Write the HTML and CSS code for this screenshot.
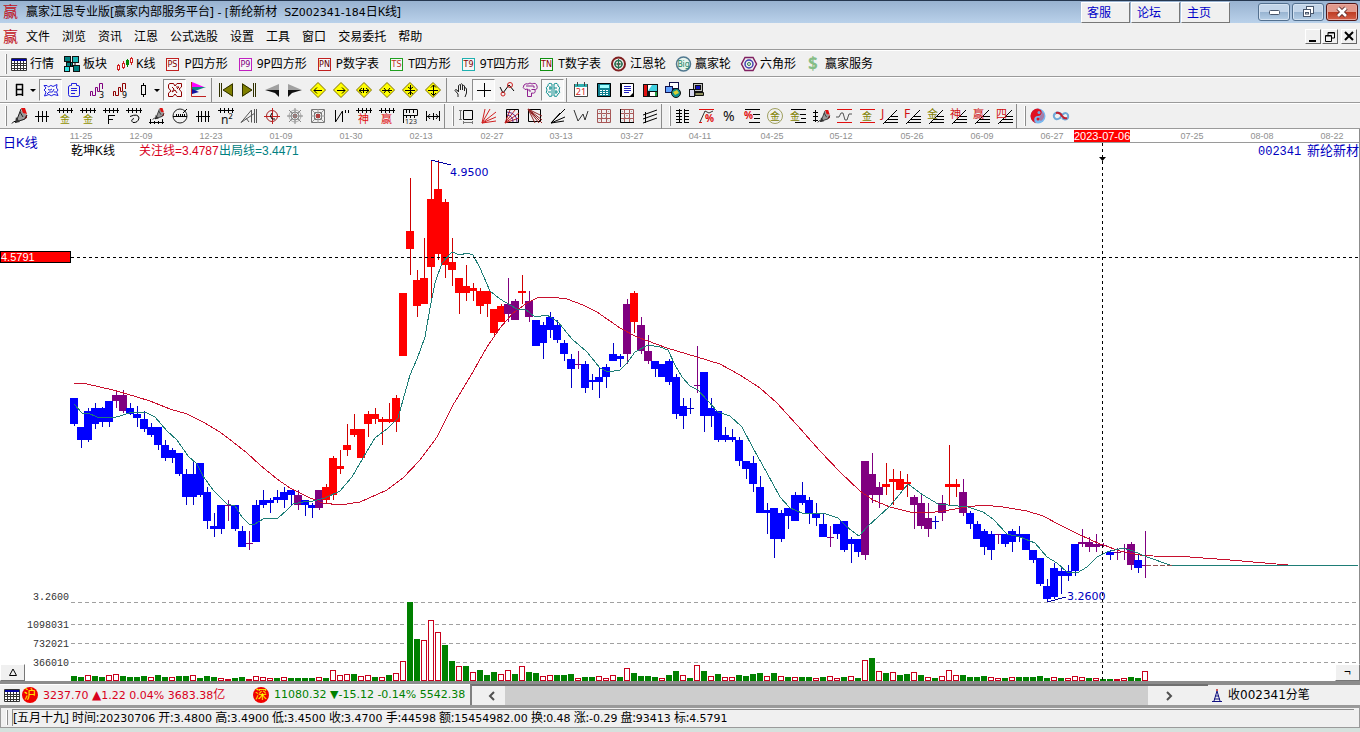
FILE: index.html
```html
<!DOCTYPE html>
<html lang="zh-CN">
<head>
    <meta charset="UTF-8">
    <meta name="viewport" content="width=device-width, initial-scale=1.0">
    <title>赢家江恩专业版</title>
    <link rel="stylesheet" href="styles.css">
</head>
<body>
    <div class="window">
        <header class="titlebar">
            <svg class="icon" data-icon="logo"></svg>
            <h1 class="title">赢家江恩专业版[赢家内部服务平台]<span class="num"> - [</span>新纶新材<span class="num">&nbsp; SZ002341-184</span>日K线]</h1>
            <nav class="links">
                <a href="#">客服</a>
                <a href="#">论坛</a>
                <a href="#">主页</a>
            </nav>
            <div class="window-buttons">
                <button aria-label="最小化"><svg class="icon" data-icon="winMin"></svg></button>
                <button aria-label="还原"><svg class="icon" data-icon="winRestore"></svg></button>
                <button class="close" aria-label="关闭"><svg class="icon" data-icon="winClose"></svg></button>
            </div>
        </header>

        <div class="menubar">
            <svg class="icon" data-icon="logo"></svg>
            <nav class="menu">
                <button>文件</button>
                <button>浏览</button>
                <button>资讯</button>
                <button>江恩</button>
                <button>公式选股</button>
                <button>设置</button>
                <button>工具</button>
                <button>窗口</button>
                <button>交易委托</button>
                <button>帮助</button>
            </nav>
            <div class="mdi-buttons">
                <button aria-label="最小化"><svg class="icon" data-icon="mdiMin"></svg></button>
                <button aria-label="还原"><svg class="icon" data-icon="mdiRestore"></svg></button>
                <button class="close" aria-label="关闭"><svg class="icon" data-icon="mdiClose"></svg></button>
            </div>
        </div>

        <div class="toolbar toolbar-text">
            <span class="grip"></span>
            <button><svg class="icon" data-icon="quote"></svg>行情</button>
            <button><svg class="icon" data-icon="blocks"></svg>板块</button>
            <button><svg class="icon" data-icon="kline"></svg>K线</button>
            <button><svg class="icon" data-icon="ps"></svg>P四方形</button>
            <button><svg class="icon" data-icon="p9"></svg>9P四方形</button>
            <button><svg class="icon" data-icon="pn"></svg>P数字表</button>
            <button><svg class="icon" data-icon="ts"></svg>T四方形</button>
            <button><svg class="icon" data-icon="t9"></svg>9T四方形</button>
            <button><svg class="icon" data-icon="tn"></svg>T数字表</button>
            <button><svg class="icon" data-icon="gannWheel"></svg>江恩轮</button>
            <button><svg class="icon" data-icon="bigWheel"></svg>赢家轮</button>
            <button><svg class="icon" data-icon="hexagon"></svg>六角形</button>
            <button><svg class="icon" data-icon="dollar"></svg>赢家服务</button>
        </div>

        <div class="toolbar" id="view-tools"></div>
        <div class="toolbar" id="draw-tools"></div>

        <main class="chart">
            <svg class="plot" id="plot">
                <g transform="translate(0 -129)">
                    <path class="axis-line" d="M70 142.5H1359"/>
                    <g id="dates"></g>
                    <text class="label-blue cjk" x="3" y="147">日K线</text>
                    <text class="label-black cjk-small" x="71" y="155">乾坤K线</text>
                    <text class="label-red cjk-small" x="139" y="155">关注线=3.4787</text>
                    <text class="label-teal cjk-small" x="219" y="155">出局线=3.4471</text>
                    <text class="label-blue code" x="1258" y="155">002341</text>
                    <text class="label-blue cjk" x="1307" y="155">新纶新材</text>

                    <g class="grid">
                        <line x1="71" y1="602.5" x2="100%" y2="602.5"/>
                        <line x1="71" y1="624.5" x2="100%" y2="624.5"/>
                        <line x1="71" y1="643.5" x2="100%" y2="643.5"/>
                        <line x1="71" y1="662.5" x2="100%" y2="662.5"/>
                    </g>
                    <g class="scale">
                        <text x="69" y="600">3.2600</text>
                        <text x="69" y="628">1098031</text>
                        <text x="69" y="647">732021</text>
                        <text x="69" y="666">366010</text>
                    </g>

                    <g id="volumes"></g>
                    <g id="candles"></g>
                    <polyline id="line-attention" class="line-red"/>
                    <polyline id="line-exit" class="line-teal"/>
                    <path class="line-last" d="M1146 565.5H1172"/>

                    <path class="pointer" d="M431 160 451 165M1047 602 1066 597"/>
                    <text class="label-blue number" x="450" y="176">4.9500</text>
                    <text class="label-blue number" x="1067" y="600">3.2600</text>

                    <g class="cross">
                        <line x1="71" y1="257.5" x2="100%" y2="257.5"/>
                        <line x1="1102.5" y1="143" x2="1102.5" y2="681"/>
                    </g>
                    <path d="M1099 157H1106L1102.5 161Z"/>
                    <rect class="price-box" x="0.5" y="251.5" width="70" height="11"/>
                    <text class="box-text" x="1" y="261">4.5791</text>
                    <rect class="date-box" x="1074" y="130" width="56" height="12"/>
                    <text class="box-text" x="1074" y="140">2023-07-06</text>
                </g>
            </svg>
            <button class="corner corner-left" aria-label="展开"><svg class="icon" data-icon="triangle"></svg></button>
            <button class="corner corner-right">¬</button>
        </main>

        <div class="statusbar">
            <div class="quotes">
                <svg class="icon" data-icon="quote"></svg>
                <svg class="icon badge" data-icon="shanghai"></svg>
                <span class="up index-sh"><span class="num">3237.70 </span>▲<span class="num">1.22 0.04% 3683.38</span>亿</span>
                <svg class="icon badge" data-icon="shenzhen"></svg>
                <span class="down num">11080.32 ▼-15.12 -0.14% 5542.38</span>
            </div>
            <div class="scrollbar">
                <button aria-label="向左"><svg class="icon" data-icon="scrollLeft"></svg></button>
                <div class="thumb"></div>
                <button class="right" aria-label="向右"><svg class="icon" data-icon="scrollRight"></svg></button>
            </div>
            <div class="feed">
                <svg class="icon" data-icon="antenna"></svg>
                <span>收002341分笔</span>
            </div>
        </div>

        <footer class="infobar">
            <span class="grip"></span>
            <div class="info">[五月十九] 时间:<span class="num">20230706</span> 开:<span class="num">3.4800</span> 高:<span class="num">3.4900</span> 低:<span class="num">3.4500</span> 收:<span class="num">3.4700</span> 手:<span class="num">44598</span> 额:<span class="num">15454982.00</span> 换:<span class="num">0.48</span> 涨:<span class="num">-0.29</span> 盘:<span class="num">93413</span> 标:<span class="num">4.5791</span></div>
        </footer>
    </div>

    <script src="script.js"></script>
</body>
</html>
```

FILE: styles.css
```css
* {
    box-sizing: border-box;
}
body {
    margin: 0;
    background-color: #d5e1dd;
    font-family: "Noto Sans", "Noto Sans CJK SC", sans-serif;
    font-size: 12px;
    line-height: 16px;
    color: #000;
}
button {
    font: inherit;
    color: inherit;
    margin: 0;
    padding: 0;
    border: none;
    background: none;
    white-space: nowrap;
}
.window {
    display: flex;
    flex-direction: column;
    height: 100vh;
    padding-bottom: 4px;
    overflow: hidden;
}
.icon {
    display: block;
    flex: none;
    width: 16px;
    height: 16px;
    fill: none;
    overflow: visible;
}
.num {
    font-family: "DejaVu Sans", sans-serif;
    font-size: 11px;
}

/* title bar */
.titlebar {
    display: flex;
    align-items: center;
    flex: none;
    height: 23px;
    padding: 0 2px;
    border-top: 1px solid #25364e;
    background: linear-gradient(#98b2d0, #b9d1ea);
}
.title {
    flex: 1;
    margin: 0 0 0 8px;
    font-size: 12px;
    font-weight: normal;
    white-space: nowrap;
}
.links {
    display: flex;
    gap: 1px;
    margin-right: 28px;
}
.links a {
    width: 49px;
    height: 21px;
    padding: 2px 5px;
    border: 1px solid;
    border-color: #fff #777 #777 #fff;
    background-color: #f0f0f0;
    color: #0000c8;
    text-decoration: none;
}
.window-buttons {
    display: flex;
    gap: 2px;
}
.window-buttons button {
    display: flex;
    align-items: center;
    justify-content: center;
    width: 32px;
    height: 18px;
    border: 1px solid #53708f;
    border-radius: 3px;
    background: linear-gradient(#c3d5e9 50%, #97b3d0 50%, #b5cee6);
    box-shadow: inset 0 0 0 1px #d4e2f1;
}
.window-buttons .close {
    border-color: #521616;
    background: linear-gradient(#e29a8d 50%, #bd3b22 50%, #d5614a);
    box-shadow: inset 0 0 0 1px #e9aaa0;
}

/* menu */
.menubar {
    display: flex;
    align-items: center;
    flex: none;
    height: 27px;
    padding: 1px 3px 0 2px;
    border-bottom: 1px solid #9a9a9a;
    background-color: #f0f0f0;
}
.menu {
    display: flex;
    flex: 1;
    padding-left: 2px;
}
.menu button {
    padding: 1px 6px 0;
}
.mdi-buttons {
    display: flex;
    gap: 1px;
}
.mdi-buttons button {
    width: 16px;
    height: 15px;
    border: 1px solid;
    border-color: #fff #666 #666 #fff;
    background-color: #f0f0f0;
}
.mdi-buttons .icon {
    width: 14px;
    height: 13px;
}
.mdi-buttons .close {
    margin-left: 2px;
}

/* toolbars */
.toolbar {
    display: flex;
    align-items: center;
    flex: none;
    height: 26px;
    padding-left: 5px;
    border-top: 1px solid #fff;
    border-bottom: 1px solid #9a9a9a;
    background-color: #f0f0f0;
}
.toolbar-text {
    height: 27px;
}
.grip {
    flex: none;
    width: 2px;
    height: 20px;
    border-left: 1px solid #fff;
    border-right: 1px solid #8c8c8c;
}
.toolbar-text button {
    display: flex;
    align-items: center;
    gap: 3px;
    padding: 0 6px 0 4px;
}
.tool {
    display: flex;
    align-items: center;
    justify-content: center;
    flex: none;
    width: 23px;
    height: 22px;
}
.tool.drop {
    width: 32px;
}
.tool.drop::after {
    content: "";
    margin-left: 3px;
    border: 3px solid transparent;
    border-top-color: #000;
    border-bottom: none;
}
.tool.pressed {
    border: 1px solid;
    border-color: #8c8c8c #fff #fff #8c8c8c;
    background-color: #f8f8f8;
}
.separator {
    flex: none;
    width: 5px;
    height: 24px;
    border-right: 2px solid #f0f0f0;
    background: linear-gradient(90deg, transparent 2px, #8c8c8c 2px);
}
.break {
    flex: none;
    width: 8px;
    height: 25px;
    border-left: 1px solid #8c8c8c;
}

/* chart */
.chart {
    position: relative;
    flex: 1;
    min-height: 0;
    border-right: 1px solid #8c8c8c;
    background-color: #fff;
}
.plot {
    display: block;
    width: 100%;
    height: 100%;
}
.plot text {
    white-space: pre;
}
.axis-line {
    stroke: #9a9a9a;
}
.date {
    font: 9px "Liberation Sans", sans-serif;
    fill: #909090;
    text-anchor: middle;
}
.cjk {
    font: 13px "Liberation Sans", "Noto Sans CJK SC", sans-serif;
}
.cjk-small {
    font: 12px "Liberation Sans", "Noto Sans CJK SC", sans-serif;
}
.code {
    font: 12px "Liberation Mono", monospace;
}
.number {
    font: 11px "DejaVu Sans", sans-serif;
}
.box-text {
    font: 11px "Liberation Sans", sans-serif;
    fill: #fff;
}
.label-blue {
    fill: #0000c0;
}
.label-black {
    fill: #000;
}
.label-red {
    fill: #d8001c;
}
.label-teal {
    fill: #008080;
}
.scale text {
    font: 10px "Liberation Mono", monospace;
    fill: #333;
    text-anchor: end;
}
.grid line {
    stroke: #a0a0a0;
    stroke-dasharray: 4 3;
}
.cross line {
    stroke: #000;
    stroke-dasharray: 3 3;
}
.price-box {
    fill: #f00;
    stroke: #000;
}
.date-box {
    fill: #f00;
}
.blue {
    fill: #00f;
    stroke: #0000c8;
}
.red {
    fill: #f00;
    stroke: #d00000;
}
.purple {
    fill: #800080;
    stroke: #800080;
}
#candles,
#volumes {
    shape-rendering: crispEdges;
}
#candles rect {
    stroke: none;
}
.vol-up {
    fill: #fff;
    stroke: #c8001c;
}
.vol-down {
    fill: #008000;
    stroke: #008000;
}
.line-red,
.line-teal,
.line-last,
.pointer {
    fill: none;
    stroke: #c8102e;
    shape-rendering: crispEdges;
}
.line-teal {
    stroke: #1e7d76;
}
.line-last {
    stroke: #905050;
    stroke-dasharray: 5 2;
}
.pointer {
    stroke: #0000a0;
}
.corner {
    position: absolute;
    bottom: 0;
    display: flex;
    justify-content: center;
    width: 25px;
    height: 17px;
    border: 1px solid;
    border-color: #fff #777 #777 #fff;
    background-color: #f0f0f0;
    line-height: 14px;
}
.corner-left {
    left: 0;
}
.corner-right {
    right: -1px;
}

/* bottom bars */
.statusbar {
    display: flex;
    flex: none;
    height: 26px;
    border-top: 3px solid #8c8c8c;
    border-bottom: 2px solid #999;
    background-color: #f0f0f0;
    font-family: "DejaVu Sans", "Noto Sans CJK SC", sans-serif;
}
.quotes {
    display: flex;
    align-items: center;
    flex: none;
    width: 470px;
    padding-left: 4px;
    border-top: 1px solid #fff;
    overflow: hidden;
    white-space: nowrap;
}
.quotes .badge {
    margin: 0 5px 0 2px;
}
.index-sh {
    flex: none;
    width: 208px;
}
.up {
    color: #d8001c;
}
.down {
    color: #008000;
}
.scrollbar {
    display: flex;
    flex: 1;
    border-top: 2px solid #707070;
    border-left: 2px solid #808080;
    background-color: #f0f0f0;
}
.scrollbar button {
    display: flex;
    align-items: center;
    justify-content: flex-end;
    width: 33px;
    padding-right: 5px;
}
.scrollbar .right {
    justify-content: flex-start;
    width: 60px;
    padding: 0 0 0 13px;
}
.thumb {
    flex: 1;
    background-color: #cdcdcd;
}
.feed {
    display: flex;
    align-items: center;
    flex: none;
    gap: 2px;
    width: 152px;
    padding-left: 2px;
    border-top: 1px solid #8c8c8c;
}
.infobar {
    display: flex;
    align-items: center;
    flex: none;
    height: 21px;
    padding: 1px 5px;
    border: 1px solid #9a9a9a;
    background-color: #f0f0f0;
}
.infobar .grip {
    height: 15px;
    margin-right: 4px;
}
.info {
    flex: 1;
    height: 17px;
    border-top: 1px solid #8c8c8c;
    border-left: 1px solid #8c8c8c;
    white-space: nowrap;
}
```

FILE: script.js
```js
// ---------- icons ----------
const p = (d, color = '#000', extra = '') => `<path d="${d}" stroke="${color}" ${extra}/>`;
const f = (d, color) => `<path d="${d}" fill="${color}"/>`;
const t = (s, x, y, size, color, extra = '') =>
    `<text x="${x}" y="${y}" font-size="${size}" fill="${color}" ${extra}>${s}</text>`;

const tag = (s, color, frame) =>
    `<rect x="1.5" y="2.5" width="12" height="12" stroke="${frame}" fill="#fff" fill-opacity=".4"/>` +
    t(s, 7.5, 11, 8, color, 'font-family="DejaVu Sans" text-anchor="middle"');
const comb = p('M0 2.5H16M2.5 0v5M6.5 0v5M10.5 0v5M14.5 0v5');
const fan = (s, color) => p('M3 14.5H16M6 11.5H16M9 8.5H16M1 16 15 2') +
    t(s, -1, 10, s.charCodeAt(0) > 255 ? 11 : 12, color);
const diamond = arrows => '<path d="M8 .5 15.5 8 8 15.5 .5 8Z" fill="#ff0" stroke="#807000"/>' + p(arrows);
const wave = (n, color) => p('M1.5 14V9.5H3.5V13.5H6.5V5.5H8.5V9.5H10.5V1.5H13.5V7', color) +
    t(n, 10, 16, 8, '#000', 'font-family="DejaVu Sans"');
const pen = f('M9 3 12 2 16 8 13 12 5 14Z', '#9a9a9a') + f('M10 0H14L16 6 12 5Z', '#e01010') +
    f('M13 11 16 6V10Z', '#a01010') + p('M10 1 5 14 14 11 16 7M9 4 12 9', '#222') + f('M5 9 9 14 4 15Z', '#333') + p('M1 15.5Q3 12 5 14');
const paneGrid = p('M1.5 1.5H14.5V14.5H1.5ZM1.5 5.5H14.5M1.5 10.5H14.5M5.5 1.5V14.5M10.5 1.5V14.5', '#a85858') +
    p('M1 1 15 15M15 1 1 15', '#999', 'stroke-dasharray="1 2"');

const icons = {
    logo: t('赢', 1, 13, 15, '#c01020', 'font-family="Noto Sans CJK SC"'),
    winMin: '<rect x="3.5" y="6.5" width="10" height="4" rx="1" fill="#fff" stroke="#49566b"/>',
    winRestore: '<g stroke="#49566b" fill="#fff"><rect x="6.5" y="2.5" width="7" height="7"/><rect x="3.5" y="5.5" width="7" height="7"/><rect x="5.5" y="8.5" width="3" height="1.5"/></g>',
    winClose: p('M4 4 12 12M12 4 4 12', '#5a2a2a', 'stroke-width="4.5"') + p('M4 4 12 12M12 4 4 12', '#fff', 'stroke-width="2.6"'),
    mdiMin: f('M3 10H10V12H3Z', '#000'),
    mdiRestore: p('M5 5V2.5H11.5V8H9M2.5 5.5H8.5V11.5H2.5ZM5 3H11M3 6H8'),
    mdiClose: p('M3 2 11 10M11 2 3 10', '#000', 'stroke-width="2"'),
    triangle: p('M8 4 11.5 10.5H4.5Z'),

    quote: f('M0 2H16V15H0Z', '#fff') +
        p('M.5 2.5H15.5V14.5H.5ZM3.5 5V15M6.5 5V15M9.5 5V15M12.5 5V15M0 7.5H16M0 9.5H16M0 12.5H16', '#333') + f('M1 3H15V5H1Z', '#0000a0'),
    blocks: '<g fill="#008080" stroke="#111"><rect x=".5" y=".5" width="6" height="5"/><rect x="8.5" y=".5" width="6" height="6" fill="#20b8b8"/><rect x="2.5" y="6.5" width="6" height="4"/><rect x=".5" y="10.5" width="5" height="5" fill="#30e0e0"/><rect x="9.5" y="9.5" width="6" height="6"/></g>' + p('M6.5 6V10H9M11 7v2'),
    kline: p('M1.5 8V15M6.5 5V13M14.5 1V9', '#d02020') + p('M10.5 3V11', '#008000') +
        '<g stroke="#d02020" fill="#fff"><rect x=".5" y="9.5" width="2" height="4"/><rect x="5.5" y="7.5" width="2" height="4"/><rect x="13.5" y="2.5" width="2" height="4"/></g><rect x="9.5" y="4.5" width="2" height="4" fill="#080" stroke="#080"/>',
    ps: tag('PS', '#800000', '#c02020'),
    p9: tag('P9', '#800080', '#c020c0'),
    pn: tag('PN', '#600000', '#c02020'),
    ts: tag('TS', '#c03020', '#20a020'),
    t9: tag('T9', '#800000', '#20b0b0'),
    tn: tag('TN', '#900000', '#109010'),
    gannWheel: '<circle cx="7.5" cy="8" r="6.5" stroke="#802020" stroke-width="2"/><circle cx="7.5" cy="8" r="3.5" stroke="#287050" stroke-width="1.5"/><circle cx="7.5" cy="8" r="1.5" fill="#a02020"/>' + p('M7.5 3V13M3 8H12', '#287050'),
    bigWheel: '<circle cx="7.5" cy="8" r="7" stroke="#507890" stroke-width="1.5" fill="#e8f4ec"/>' + t('Big', 7.5, 11, 8, '#108060', 'text-anchor="middle"'),
    hexagon: p('M4 1.5H12L15.5 8 12 14.5H4L.5 8Z', '#802060', 'stroke-width="1.5"') + '<circle cx="8" cy="8" r="4" stroke="#4040b0" stroke-width="1.5"/><circle cx="8" cy="8" r="1.5" stroke="#308050"/>',
    dollar: t('$', 2, 14, 17, '#86bd86', 'font-weight="bold"'),

    day: p('M5.5 2V14M11.5 2V14M5 2.5H12M5 7.5H12M5 12.5H12', '#000', 'stroke-width="1.5"'),
    cloud: p('M1 3.5H4L5.5 5Q8 2 10 4.5L14 2.5 13.5 6 15 8 13.5 10 15 13.5 11 12.5Q8 15 6 12.5L1.5 14 3 10 1 8 3 6ZM5 7.5Q7 9 9 7M11 7 9.5 10H6M4 12 6 10M12 9V11', '#2020e0'),
    clipboard: p('M4.5 3.5H5.5V1.5H10.5V3.5H12Q13.5 3.5 13.5 5V12.5Q13.5 14.5 12 14.5H4.5Q2.5 14.5 2.5 12.5V5Q2.5 3.5 4.5 3.5ZM5 6.5H11M5 8.5H11M5 11.5H9', '#2020e0'),
    wave3: wave(3, '#800080'),
    wave9: wave(9, '#900000'),
    candle: '<rect x="6.5" y="3.5" width="4" height="9" stroke="#000"/>' + p('M8.5 1V3M8.5 13V15'),
    maze: p('M2.5 1.5H6.5L8 4 10 1.5H14.5V5L12 7 14.5 10V14.5H10L8 12 6 14.5H1.5V11L4 9 1.5 6V3ZM5 5 7 7 5 10 8 8 10 11M9 5H12L10 7', '#900000'),
    flag: f('M2 0 14 5H2Z', '#f0f') + f('M2 5H16L2 10Z', '#108080') + f('M2 7 9 10 2 12Z', '#1010a0') + p('M1.5 0V14.5H16', '#c02020'),
    first: p('M1.5 1V15M3.5 1V15', '#303000') + f('M15 1V15L5 8Z', '#808000') + p('M14.5 2V14L5 8Z', '#303000'),
    last: p('M12.5 1V15M14.5 1V15', '#303000') + f('M1 1V15L11 8Z', '#808000') + p('M1.5 2V14L11 8Z', '#303000'),
    prev: f('M15 2V8H1Z', '#a0a0a0') + f('M1 8H15V15L11 11Z', '#111'),
    next: f('M1 2V8H15Z', '#a0a0a0') + f('M15 8H1V15L5 11Z', '#111'),
    goLeft: diamond('M4 8.5H12M7 5.5 4 8.5 7 11.5'),
    goRight: diamond('M4 8.5H12M9 5.5 12 8.5 9 11.5'),
    widen: diamond('M3 8.5H13M6 6 3 8.5 6 11M10 6 13 8.5 10 11M7.5 6V11'),
    narrow: diamond('M3 8.5H13M5 6 7 8.5 5 11M11 6 9 8.5 11 11'),
    shrink: diamond('M3 8.5H13M8.5 3V13M6 5 8.5 7 11 5M6 12 8.5 10 11 12'),
    expand: diamond('M3 8.5H13M8.5 3V13M6 5.5 8.5 3 11 5.5M6 11 8.5 13.5 11 11'),
    hand: p('M5 15V12L2 8.5Q2 7 4 8L5.5 10V3.5Q6.5 2 7.5 3.5V8V2.5Q8.5 1 9.5 2.5V8V4Q11 2.5 11.5 4V9V6Q13 5 13.5 7V11L12 15', '#222'),
    cross: p('M8.5 1V15M1 8.5H15'),
    zigzag: p('M1 5 4 11 10 3 15 9') + '<circle cx="4" cy="12" r="2" stroke="#d02020"/><circle cx="11" cy="3" r="2.5" stroke="#d02020"/>',
    balloon: p('M2 3Q4 1 6 2Q8 0 10 2Q14 0 15 4Q16 8 12 7.5H9.5M2 3Q0 6 3 7.5L5.5 7V14.5H9.5V11Q14 12 13 8M4 4H12V6M7 7V9H9', '#902090'),
    brain: p('M7 2Q3 0 3 4Q0 5 2 8Q0 11 3 12Q4 16 7 14ZM9 2Q13 0 13 4Q16 5 14 8Q16 11 13 12Q12 16 9 14ZM4 6H7M9 6H12M3 10H6M10 10H13M5 4V8M11 8V12', '#109090'),
    calendar: f('M1 2H15V15H1Z', '#fff') + f('M1 2H15V5H1Z', '#30b0b0') + p('M1.5 2V14.5H14.5V2M4.5 0V4M11.5 0V4', '#444') + t('21', 8, 13, 9, '#d02020', 'text-anchor="middle"'),
    calculator: f('M1 1H15V15H1Z', '#108090') + p('M1.5 1.5H14.5V14.5H1.5Z') + f('M4 3H13V6H4Z', '#a0ffff') + p('M4 8.5H13M4 10.5H13M4 12.5H13', '#fff', 'stroke-dasharray="2 1"'),
    notepad: f('M2 1H14V15H2Z', '#fff') + p('M2.5 1.5H14.5V14.5H2.5ZM1.5 1V15') + p('M5 4.5H12M5 6.5H12M5 8.5H12M5 10.5H10', '#2020c0') + f('M10 15 15 10V15Z', '#000'),
    floppy: f('M1 2H16V15H1Z', '#111') + f('M2 3H5V14H2Z', '#e01010') + f('M6 3H15V9H6Z', '#40d0e0') + f('M6 3H10L6 9Z', '#fff') + f('M8 10H13V14H8Z', '#fff') + f('M13 10H15V14H13Z', '#20a040'),
    network: '<g stroke="#10104a"><rect x="4.5" y=".5" width="9" height="6" fill="#fff"/><rect x=".5" y="4.5" width="7" height="6" fill="#60a0ff"/></g><circle cx="11" cy="11" r="4.5" fill="#109090" stroke="#111"/>' + f('M8 10 12 8 14 11 10 13Z', '#d8d030'),
    computers: '<g stroke="#111"><rect x="5.5" y="1.5" width="9" height="8" fill="#c0c0c0"/><rect x="7.5" y="3.5" width="5" height="4" fill="#1010c0"/><path d="M7 10.5H15.5V13.5H7Z" fill="#909060"/><rect x="1.5" y="7.5" width="5" height="7" fill="#d8d8f0"/></g>',

    pen: pen,
    hash: p('M1 8.5H15M4.5 3V14M8.5 3V14M12.5 3V14'),
    combGold: comb + t('金', 3, 15, 10, '#909000'),
    combF: comb + p('M5 7.5H12M5.5 7V16M5 11.5H10'),
    spiral: comb + p('M4 8.5Q12 5 13 10Q12 15 7 14.5Q4 12 8 10.5'),
    penRuler: '<g transform="translate(3 0) scale(.75)">' + pen + '</g>' + p('M0 14.5H15M1.5 11V16M5.5 13V16M9.5 13V16M13.5 11V16'),
    circleRuler: '<circle cx="8" cy="8" r="7" stroke="#222"/>' + p('M1 8.5H15M4.5 6V9M6.5 6V9M8.5 6V9M10.5 6V9M12.5 6V9M11 5 15 1'),
    hash4: p('M1 8.5H15M3.5 3V14M6.5 3V14M10.5 3V14M13.5 3V14'),
    combN: comb + t('n²', 3, 16, 12, '#111'),
    angles: p('M0 14.5 10.5 2V14.5M0 14.5 14 5M13.5 1V15M15.5 1V15M5 10 8 14', '#555'),
    target: '<circle cx="8" cy="8" r="5.5" stroke="#a02020"/>' + p('M8.5 0V16M0 8.5H16', '#c02020') + p('M8 5Q5 8 8 11H11'),
    web: '<circle cx="8" cy="8" r="6" stroke="#aaa"/><circle cx="8" cy="8" r="4" stroke="#888"/><circle cx="8" cy="8" r="2" fill="#b04040"/>' + p('M8 0V16M0 8H16M2 2 14 14M14 2 2 14', '#888'),
    squareWeb: p('M1.5 1.5H14.5V14.5H1.5ZM4.5 4.5H11.5V11.5H4.5Z', '#777') + p('M1 1 15 15M15 1 1 15M8 1V15M1 8H15', '#999') + f('M6 6H10V10H6Z', '#b04040'),
    slopes: p('M2.5 2V14L9.5 3V14M12.5 2V5M15.5 2V5'),
    combGod: comb + t('神', 2, 15, 11, '#e01010'),
    combWin: comb + t('赢', 2, 15, 11, '#e01010'),
    scaleBars: p('M1.5 15V1.5H15.5M1 7.5H15.5V2M4.5 2V5M7.5 2V5M11.5 2V5M4.5 8V10M8.5 8V10M12.5 8V10') + t('123', 3, 16, 7, '#222'),
    width: p('M1.5 3V13M14.5 3V13M2 8.5H14M5 6 3 8.5 5 11M11 6 13 8.5 11 11M8.5 5V12'),

    rectTool: p('M5.5 2.5H14.5V11.5H5.5Z') + p('M2.5 2V12M1 2.5H4M1 11.5H4M5 14.5H15M14.5 13V16M5.5 13V16', '#777'),
    fanRed: p('M1 15 4 1M1 15 9 1M1 15 15 4M1 15 15 9M1 15 15 13', '#d02020'),
    fanBox: p('M2.5 1.5H14.5V14.5H2.5Z') + p('M1 15 6 2M1 15 11 2M1 15 15 5M1 15 15 10', '#c02020') + p('M3 7Q9 8 9 14M3 4Q13 5 13 14', '#602080'),
    fanDown: p('M1.5 1.5H13.5V13.5H1.5Z') + p('M1 1 15 15M1 1 15 8M1 1 8 15M1 1 15 12M1 1 12 15', '#902020'),
    rays: p('M1 15 10 5M1 15 15 1M1 15 15 9M1 15 14 13'),
    zigDots: p('M1 2 5 13 10 6 12 12 15 3', '#333'),
    gridA: paneGrid,
    gridB: paneGrid + p('M1.5 1V14.5H15'),
    parallels: p('M1 7 15 2M1 11 15 6M1 15 15 10M3.5 4V15'),

    ladder: p('M4.5 1V15M9.5 1V15M1 2.5H7M1 5.5H7M1 8.5H7M1 11.5H7M1 14.5H7M9 2.5H14M9 5.5H14M9 8.5H14M9 11.5H14M9 14.5H14'),
    percentTop: p('M1 1.5H16M1 14.5H4', '#e01010') + p('M2 14 7 3 11 5 15 3', '#333') + t('%', 7, 14, 10, '#e01010', 'font-weight="bold"'),
    percent: t('%', 2, 13, 14, '#111'),
    percentLines: p('M1 1.5H16M9 6.5H16M10 10.5H16M5 14.5H16') + t('%', 0, 11, 10, '#e01010', 'font-weight="bold"'),
    goldCircle: '<circle cx="8" cy="8" r="7.5" stroke="#a0a060"/>' + t('金', 3, 12, 10, '#808000'),
    goldLines: p('M1 1.5H16M10 6.5H16M11 10.5H16M5 14.5H16') + t('金', 0, 12, 10, '#808000'),
    penScale: p('M2.5 2V14M0 4.5H5M0 8.5H5M0 12.5H5') + '<g transform="translate(4 2) scale(.8)">' + pen + '</g>',
    waveBand: p('M1 1.5H16M1 14.5H16', '#e01010') + p('M0 9H3L5 5H7L9 12H11L13 6H16', '#555'),
    goldBand: p('M1 1.5H16M1 14.5H16', '#e01010') + t('金', 3, 12, 10, '#808000'),
    fanJ: fan('J', '#d01010'),
    fanF: fan('F', '#d01010'),
    fanGold: fan('金', '#808000'),
    fanGod: fan('神', '#d01010'),
    fanWin: fan('赢', '#d01010'),
    fanFour: fan('四', '#d01010'),
    taiji: '<circle cx="8" cy="8" r="7.5" fill="#78b8f0"/><path d="M8 .5A7.5 7.5 0 0 0 8 15.5A3.7 3.7 0 0 1 8 8A3.7 3.7 0 0 0 11 2Z" fill="#e01020"/><path d="M11 2Q14 5 10 8Q8 11 11 13Q15 10 14 6Z" fill="#d04060" fill-opacity=".5"/><circle cx="9" cy="4.5" r="1.5" fill="#70a8e0"/><circle cx="8" cy="11" r="1.5" fill="#e01020"/>',
    infinity: p('M9 7Q7 4 4 4.5Q0 6 1 9Q3 13 7 10L9 7Q13 3 15 7Q16 11 12 11.5Q10 11 9 10', '#70a8d8', 'stroke-width="2"') + p('M3 5Q7 4 9 8Q11 11 14 10', '#c02030', 'stroke-width="2"'),

    shanghai: '<circle cx="8" cy="8" r="8" fill="#f00000"/>' + t('沪', 2, 12, 12, '#ff0'),
    shenzhen: '<circle cx="8" cy="8" r="8" fill="#f00000"/>' + t('深', 2, 12, 12, '#ff0'),
    scrollLeft: p('M10 4 6 8 10 12', '#505050', 'stroke-width="2"'),
    scrollRight: p('M6 4 10 8 6 12', '#505050', 'stroke-width="2"'),
    antenna: p('M2 14.5H12M7 4 4 14M7 4 10 14M5 9H9M4 12H10', '#101080') + '<circle cx="7" cy="3" r="1" fill="#c02020"/>'
};

function toolButton(name) {
    if (name === '|') return '<span class="separator"></span>';
    if (name === '||') return '<span class="break"></span><span class="grip"></span>';
    const [icon, state = ''] = name.split('.');
    return `<button class="tool ${state}" aria-label="${icon}"><svg class="icon" data-icon="${icon}"></svg></button>`;
}

function buildToolbar(id, names) {
    document.getElementById(id).innerHTML =
        '<span class="grip"></span>' + names.split(' ').map(toolButton).join('');
}

buildToolbar('view-tools', 'day.drop cloud.pressed clipboard wave3 wave9 candle.drop maze.pressed flag | ' +
    'first last prev next goLeft goRight widen narrow shrink expand | ' +
    'hand cross.pressed zigzag balloon brain.pressed | calendar calculator notepad floppy network computers');
buildToolbar('draw-tools', 'pen hash combGold combGold combF spiral penRuler circleRuler hash4 combN angles target web ' +
    'squareWeb slopes combGod combWin scaleBars width || ' +
    'rectTool fanRed fanBox fanDown rays zigDots gridA gridB parallels || ' +
    'ladder percentTop percent percentLines goldCircle goldLines penScale waveBand goldBand ' +
    'fanJ fanF fanGold fanGod fanWin fanFour || taiji infinity');

document.querySelectorAll('[data-icon]').forEach(svg => {
    svg.innerHTML = icons[svg.dataset.icon];
});

// ---------- chart ----------
const FIRST_X = 74;
const STEP = 7;
const BASE_Y = 681;

// color, body top, body bottom, high, low
const candles = `b398,424,398,426 b427,440,427,448 b411,440,408,442 b408,424,403,429 b408,422,407,427 b401,422,401,427
p395,401,391,408 p395,411,390,413 b408,414,403,415 b414,418,406,427 b419,429,411,432 b427,435,423,437 b427,445,427,450
b445,458,440,461 b450,458,448,463 b453,474,453,476 b474,497,469,505 b474,497,462,505 b463,495,463,497 b492,521,487,529
b526,529,513,537 b505,529,505,534 p505,505,500,521 b505,529,505,531 b531,547,526,547 p543,543,531,550 b505,542,500,542
b500,505,490,508 b500,503,498,513 b497,500,490,503 b492,500,487,508 b490,495,490,505 p495,505,490,510 b500,505,500,516
b505,508,503,518 p490,508,490,510 r487,500,484,503 r458,495,456,500 r466,469,450,474 r445,450,424,456 r429,435,414,437
r429,458,429,458 r414,424,411,437 r414,419,408,424 r419,422,417,445 r419,422,403,423 r398,422,395,432 r293,356,293,356
r231,249,178,275 r280,306,270,317 r278,304,238,304 r199,267,160,299 r189,254,160,260 r202,265,199,278 r262,270,238,286
r278,293,278,314 r286,293,265,301 r288,291,283,301 r291,306,288,314 r291,304,291,317 r309,333,309,335 r306,322,304,322
p304,314,278,322 p301,320,299,320 r291,293,275,304 p301,317,291,322 b320,346,320,346 b325,343,322,359 b317,330,312,338
b325,340,320,343 b343,354,340,361 b359,369,354,388 p364,364,351,369 b364,388,361,393 b380,382,374,390 b377,382,367,398
b367,377,364,388 b354,361,343,361 b356,359,354,367 p304,354,299,364 r293,322,291,333 p325,351,317,354 p351,361,335,364
b361,369,361,377 b364,377,364,377 b361,382,359,385 b377,414,374,419 b406,416,398,429 b408,408,398,414 p385,385,346,393
b372,416,372,432 b408,416,398,427 b411,440,411,442 b435,440,427,442 b437,440,429,442 b440,461,437,466 b461,469,461,479
b463,484,456,492 b487,513,476,513 b510,513,503,534 b508,539,508,558 b513,539,510,542 b508,516,508,529 b495,521,492,521
b495,503,482,505 b500,513,497,524 b513,518,503,526 b524,537,514,537 p537,537,526,547 b524,534,524,539 b521,550,521,552
b539,544,537,563 b539,552,539,557 p461,555,461,560 p474,495,453,503 p487,495,482,508 r484,487,463,495 r479,482,469,505
r479,490,471,490 r482,484,474,497 p497,505,495,529 p503,526,495,529 p518,529,503,537 b521,521,516,529 p503,513,495,521
r484,487,445,505 r484,487,479,497 p492,513,479,516 b513,524,511,529 b524,539,521,539 b531,547,529,555 b534,550,531,560
p534,534,534,544 b534,544,534,547 b531,542,529,552 b534,537,526,542 b534,550,534,550 b550,560,550,563 b558,584,558,586
b586,599,579,602 b568,597,563,599 b571,576,568,594 b571,576,565,581 b544,571,544,576 p542,544,529,547 p542,547,537,552
p544,547,534,552 p545,545,543,547 b552,555,550,560 p552,552,548,560 p548,548,544,560 p544,565,542,570 b560,568,555,573
p565,565,531,578`;

const volumes = `G5 G4 R6 G5 G4 R6 R7 G5 G4 G4 G5 R4 G6 G4 R4 G5 G5 R6 G3 G5 G4 R3 R2 G3 G4 R2 R5 R4 R3 G3 R4 G3 G3 G3 G3 R4 G3
R11 R6 R7 G7 R5 R6 G4 R4 G6 R8 R20 G79 G42 R41 R61 R49 G36 G20 R15 G15 R9 G11 G6 G9 R7 R11 G7 R15 G9 G8 R5 R6 G6 G6 G7
R3 G4 G4 R5 R3 R6 G4 R13 G8 G5 G5 G4 R3 G6 G10 R6 G3 R16 G10 R5 G7 R4 R4 G6 G5 G7 G8 R5 G8 R5 G4 R4 G4 G4 R3 G4 R5 R3
G4 R5 G3 R21 G23 R10 G8 R9 G6 G7 R9 G6 R4 G3 R5 R11 R6 G6 G4 G4 G5 R4 R3 G3 R4 G4 G4 G4 G5 G3 R4 G3 R3 R5 R4 G3 R3 G2
G2 R2 R3 G4 G3 R10`;

const attention = `74,383 87,384 113,390 127,394 150,401 170,409 187,414 203,422 220,432 233,442 247,453 260,465 277,479
290,488 310,498 323,503 340,505 360,502 387,490 403,478 420,460 437,437 453,405 470,377 487,347 500,328 513,313 527,303
537,298 550,297 567,299 583,305 597,312 620,328 637,337 667,348 697,357 720,364 740,375 760,388 777,403 797,425 820,451
840,472 860,491 873,500 890,507 910,512 927,513 943,511 967,507 983,505 1003,507 1027,511 1043,516 1060,525 1080,535
1100,544 1120,551 1140,555 1153,556 1190,557 1230,560 1288,565`;

const exit = `74,404 82,413 88,413 97,417 113,418 123,415 132,412 147,413 155,417 167,431 177,440 188,456 197,464 203,476
213,490 227,504 235,506 242,517 250,525 255,524 263,519 278,518 287,510 293,504 303,502 313,501 325,498 340,491 352,477
363,458 375,438 387,429 398,418 403,400 410,375 417,359 425,337 430,308 435,283 442,263 452,252 460,255 467,253 473,255
480,268 490,291 500,299 510,305 517,309 525,309 535,317 547,315 558,322 572,339 587,352 600,368 608,372 620,370 627,363
635,352 648,345 660,347 668,350 675,365 682,377 690,386 698,390 707,400 718,412 730,416 742,427 753,448 767,473 780,497
790,508 802,513 823,513 838,518 847,527 859,536 867,527 890,506 908,484 923,495 938,504 968,507 983,512 993,519 1007,534
1020,537 1035,543 1047,557 1057,563 1067,572 1077,573 1087,567 1097,557 1107,552 1123,548 1133,551 1147,557 1170,565
1180,566 1190,565 1358,565`;

const dates = [
    [81, '11-25'], [141, '12-09'], [211, '12-23'], [281, '01-09'], [351, '01-30'], [421, '02-13'],
    [492, '02-27'], [561, '03-13'], [632, '03-27'], [700, '04-11'], [772, '04-25'], [841, '05-12'],
    [912, '05-26'], [982, '06-09'], [1052, '06-27'], [1192, '07-25'], [1262, '08-08'], [1332, '08-22']
];

const colors = { b: 'blue', r: 'red', p: 'purple' };

document.getElementById('candles').innerHTML = candles.split(/\s+/).map((item, i) => {
    const [top, bottom, high, low] = item.slice(1).split(',').map(Number);
    const x = FIRST_X + i * STEP;
    const body = top === bottom
        ? `<path d="M${x - 3} ${top + 0.5}h7"/>`
        : `<rect x="${x - 4}" y="${top}" width="8" height="${bottom - top}"/>`;
    return `<g class="${colors[item[0]]}"><path d="M${x + 0.5} ${high}V${low}"/>${body}</g>`;
}).join('');

document.getElementById('volumes').innerHTML = volumes.split(/\s+/).map((item, i) => {
    const h = Number(item.slice(1));
    const cls = item[0] === 'R' ? 'vol-up' : 'vol-down';
    return `<rect class="${cls}" x="${FIRST_X + i * STEP - 2.5}" y="${BASE_Y - h + 0.5}" width="5" height="${h - 1}"/>`;
}).join('');

document.getElementById('dates').innerHTML =
    dates.map(([x, s]) => `<text class="date" x="${x}" y="139">${s}</text>`).join('');

document.getElementById('line-attention').setAttribute('points', attention);
document.getElementById('line-exit').setAttribute('points', exit);
```
